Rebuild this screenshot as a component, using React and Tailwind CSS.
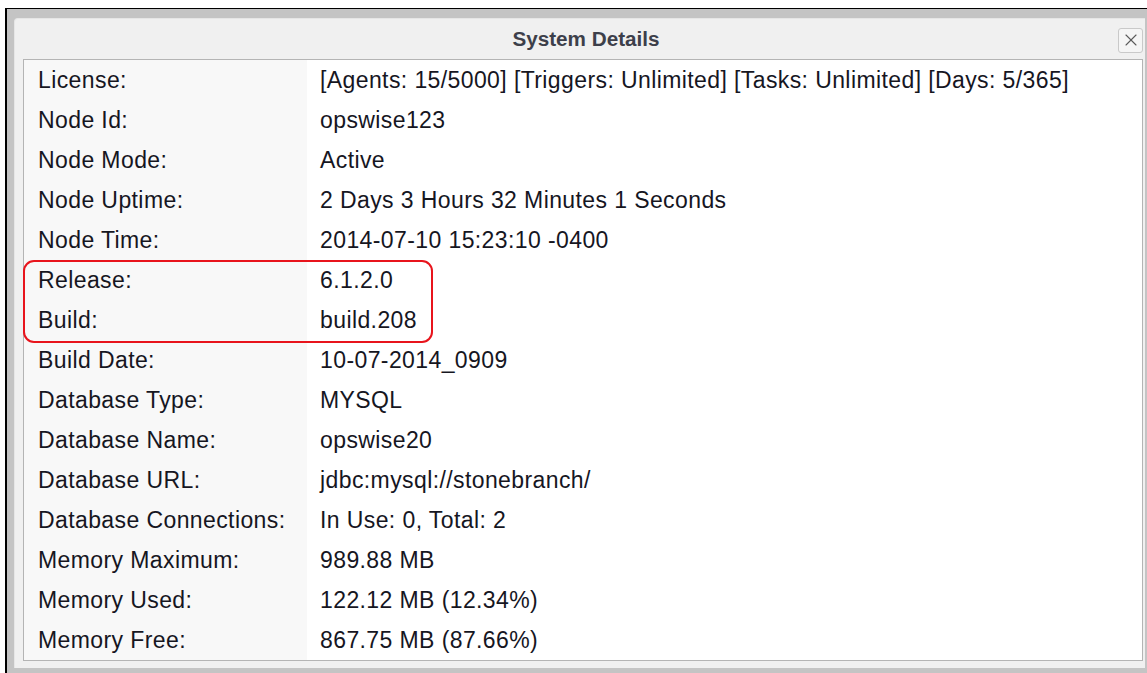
import { X } from 'lucide-react';

const rows = [
  ['License:', '[Agents: 15/5000] [Triggers: Unlimited] [Tasks: Unlimited] [Days: 5/365]'],
  ['Node Id:', 'opswise123'],
  ['Node Mode:', 'Active'],
  ['Node Uptime:', '2 Days 3 Hours 32 Minutes 1 Seconds'],
  ['Node Time:', '2014-07-10 15:23:10 -0400'],
  ['Release:', '6.1.2.0'],
  ['Build:', 'build.208'],
  ['Build Date:', '10-07-2014_0909'],
  ['Database Type:', 'MYSQL'],
  ['Database Name:', 'opswise20'],
  ['Database URL:', 'jdbc:mysql://stonebranch/'],
  ['Database Connections:', 'In Use: 0, Total: 2'],
  ['Memory Maximum:', '989.88 MB'],
  ['Memory Used:', '122.12 MB (12.34%)'],
  ['Memory Free:', '867.75 MB (87.66%)'],
];

export default function App() {
  return (
    <div
      className="h-[673px] w-[1147px] overflow-hidden bg-white pt-[8px] pl-[5px]"
      style={{ fontFamily: '"Liberation Sans", Arial, sans-serif' }}
    >
      <div className="flex h-[665px] flex-col border-t border-l-2 border-black bg-[#c4c4c4] pt-[9px] pl-[7px] pr-[2px] pb-[5px]">
        <div className="flex flex-1 flex-col rounded-tl-[4px] border-t border-l border-[#e6e6e6] bg-[#f0f0f0] pl-[8px] pr-[2px] pb-[7px]">
          {/* dialog header */}
          <div className="grid h-[40px] grid-cols-[1fr_auto_1fr] items-center">
            <div />
            <div className="pl-[6px] text-[20.7px] font-bold text-[#3d3f4a]">System Details</div>
            <div className="flex justify-end pt-[2px]">
              <button className="flex h-[25px] w-[25px] items-center justify-center rounded-[3px] border border-[#c9c9c9] bg-[#f5f5f5] text-[#5a5a5a]">
                <X className="h-[20px] w-[20px]" strokeWidth={1.3} />
              </button>
            </div>
          </div>

          {/* details table */}
          <div className="relative flex-1 border border-[#b4b4b4] bg-white text-[23px] tracking-[0.4px] text-[#16161f]">
            {rows.map(([label, value]) => (
              <div key={label} className="flex h-[40px] items-center">
                <div className="flex h-full w-[283px] items-center bg-[#f8f8f8] pl-[14px]">{label}</div>
                <div className="pl-[13px] whitespace-nowrap">{value}</div>
              </div>
            ))}
            {/* highlight around release / build */}
            <div className="pointer-events-none absolute top-[200px] left-[-1px] h-[83px] w-[410px] rounded-[11px] border-2 border-[#e8141c]" />
          </div>
        </div>
      </div>
    </div>
  );
}
